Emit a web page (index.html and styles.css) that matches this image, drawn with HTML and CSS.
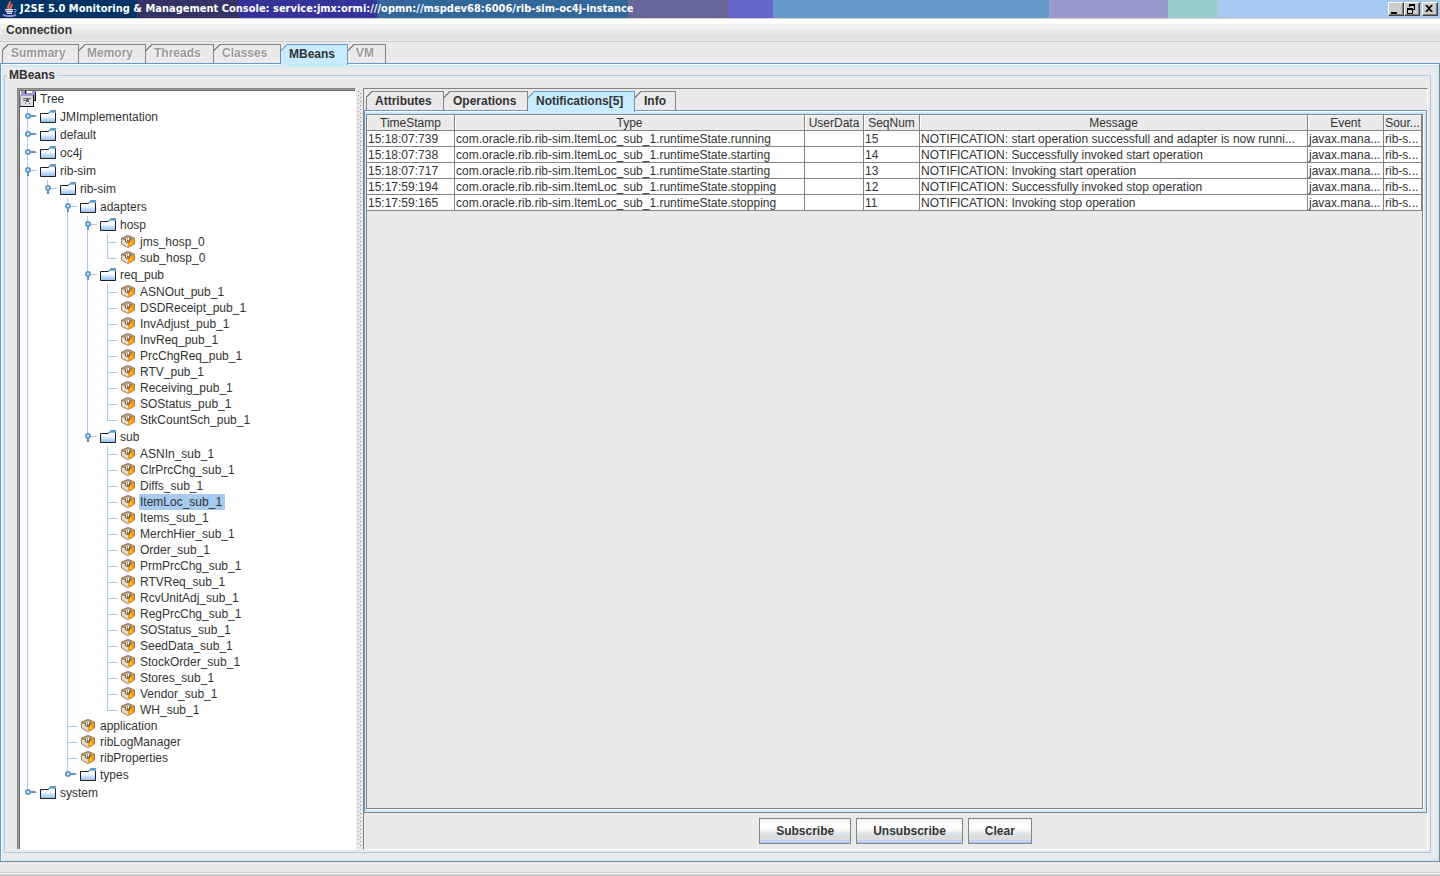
FILE: index.html
```html
<!DOCTYPE html>
<html lang="en">
<head>
  <meta charset="UTF-8">
  <meta name="viewport" content="width=device-width, initial-scale=1.0">
  <title>J2SE 5.0 Monitoring &amp; Management Console</title>
  <link rel="stylesheet" href="styles.css">
</head>
<body>
  <svg class="sprite" aria-hidden="true">
    <defs>
      <linearGradient id="folderFill" x1="0" y1="0" x2="0" y2="1">
        <stop offset="0" stop-color="#fff"/>
        <stop offset=".45" stop-color="#f2f8ff"/>
        <stop offset=".55" stop-color="#cfe6fb"/>
        <stop offset="1" stop-color="#8fbcea"/>
      </linearGradient>
      <symbol id="folder" viewBox="0 0 16 14">
        <path d="M.5 3.500H8l1.500-1H15.500V12.500H.5z" fill="url(#folderFill)" stroke="#222"/>
        <path d="M9 2.500L10.500 0H16V3H8.500z" fill="#5f9bcb"/>
        <path d="M10 2h5v1h-5z" fill="#7cc4c4"/>
      </symbol>
      <symbol id="bean" viewBox="0 0 14 13">
        <path d="M0 3L4 1 7 0l3 1 4 2v6l-3 2-4 2-4-2-3-2z" fill="#9c7c54"/>
        <path d="M1 4l6 3v5L1 9z" fill="#ecdcc8"/>
        <path d="M7 7l6-4v6l-6 3.500z" fill="#ff9a0c"/>
        <path d="M2 3l5-2 5 2-5 3z" fill="#b4a794"/>
        <path d="M4 4h1v3H4zM5 7h3v1H5zM8 4h1v3H8z" fill="#75604a"/>
        <path d="M5 4h1v2H5zM7 3h1v2H7z" fill="#fff"/>
        <path d="M6 5h1v1H6zM9 3h1v1H9z" fill="#5b4632"/>
        <path d="M9 7h2v3H9z" fill="#ffb94a"/>
      </symbol>
      <symbol id="closed" viewBox="0 0 12 12">
        <path d="M5 5h6v2H5zM11 5.500h1v1h-1z" fill="#5f93c4"/>
        <circle cx="4" cy="6" r="2" fill="#fff" stroke="#5f9bcb" stroke-width="2"/>
      </symbol>
      <symbol id="open" viewBox="0 0 12 12">
        <path d="M3 7h2v5H3z" fill="#5f93c4"/>
        <circle cx="4" cy="6" r="2" fill="#fff" stroke="#5f9bcb" stroke-width="2"/>
      </symbol>
    </defs>
  </svg>

  <header class="titlebar">
    <svg class="java" viewBox="0 0 16 16" aria-hidden="true">
      <path d="M7 8C3.500 5 9.500 4 7.500.5M9 8C7 6 11 5 10 3" stroke="#f4694a" stroke-width="2" fill="none"/>
      <path d="M3 8h8v1H3zM4 10h7v1H4zM5 12h5v1H5z" fill="#dfe3ff"/>
      <path d="M3 9h8v1H3zM4 11h6v1H4z" fill="#7f7fc8"/>
      <path d="M12 8.500c3-.5 3 2 0 3" stroke="#b9c8f0" fill="none"/>
      <path d="M1 13.500c2 2 11 2 13 0" stroke="#8e8ed8" stroke-width="2" fill="none"/>
    </svg>
    <h1>J2SE 5.0 Monitoring &amp; Management Console: service:jmx:ormi:///opmn://mspdev68:6006/rib-sim-oc4j-instance</h1>
    <div class="winbuttons">
      <button aria-label="Minimize"><svg viewBox="0 0 12 10"><path d="M2 8h6v2H2z"/></svg></button>
      <button aria-label="Restore"><svg viewBox="0 0 12 10"><path d="M4 0h6v6H8V5h1V2H5v1H4zM2 4h6v6H2zM3 6v3h4V6z" fill-rule="evenodd"/></svg></button>
      <button class="close" aria-label="Close"><svg viewBox="0 0 12 10"><path d="M2 1h2l2 2 2-2h2L7 4.500 10 8H8L6 6 4 8H2l3-3.500z"/></svg></button>
    </div>
  </header>

  <nav class="menubar"><button>Connection</button></nav>

  <div class="tabs main-tabs" role="tablist">
    <button role="tab" disabled>Summary</button>
    <button role="tab" disabled>Memory</button>
    <button role="tab" disabled>Threads</button>
    <button role="tab" disabled>Classes</button>
    <button role="tab" class="selected" aria-selected="true">MBeans</button>
    <button role="tab" disabled>VM</button>
  </div>

  <main class="page">
    <fieldset>
      <legend>MBeans</legend>
      <div class="split">
        <div class="tree">
          <div class="root">
            <svg viewBox="0 0 16 16" aria-hidden="true">
              <path d="M1 0h15v9H1z" fill="#9c9ad0"/>
              <path d="M15 1h1v9h-4V9h3zM5 0h1v3H5z" fill="#111"/>
              <path d="M7 0h5v2H7z" fill="#fff"/>
              <path d="M0 4h13v12H0z" fill="#9c9ad0"/>
              <path d="M1 5h12v10H1z" fill="#dcdce4"/>
              <path d="M13 4h1v12H0v-1h13z" fill="#111"/>
              <path d="M3 7h8v1H3zM3 9h4v1H3zM6 8h3v3H6zM5 12h1v1H5zM9 12h1v1H9z" fill="#666"/>
            </svg>
            <span>Tree</span>
          </div>
          <ul>
            <li><div class="row"><button aria-label="Expand"><svg><use href="#closed"/></svg></button><svg class="folder"><use href="#folder"/></svg><a href="#">JMImplementation</a></div></li>
            <li><div class="row"><button aria-label="Expand"><svg><use href="#closed"/></svg></button><svg class="folder"><use href="#folder"/></svg><a href="#">default</a></div></li>
            <li><div class="row"><button aria-label="Expand"><svg><use href="#closed"/></svg></button><svg class="folder"><use href="#folder"/></svg><a href="#">oc4j</a></div></li>
            <li><div class="row"><button aria-label="Collapse"><svg><use href="#open"/></svg></button><svg class="folder"><use href="#folder"/></svg><a href="#">rib-sim</a></div>
              <ul>
                <li><div class="row"><button aria-label="Collapse"><svg><use href="#open"/></svg></button><svg class="folder"><use href="#folder"/></svg><a href="#">rib-sim</a></div>
                  <ul>
                    <li><div class="row"><button aria-label="Collapse"><svg><use href="#open"/></svg></button><svg class="folder"><use href="#folder"/></svg><a href="#">adapters</a></div>
                      <ul>
                        <li><div class="row"><button aria-label="Collapse"><svg><use href="#open"/></svg></button><svg class="folder"><use href="#folder"/></svg><a href="#">hosp</a></div>
                          <ul>
                            <li><div class="row leaf"><svg class="bean"><use href="#bean"/></svg><a href="#">jms_hosp_0</a></div></li>
                            <li><div class="row leaf"><svg class="bean"><use href="#bean"/></svg><a href="#">sub_hosp_0</a></div></li>
                          </ul>
                        </li>
                        <li><div class="row"><button aria-label="Collapse"><svg><use href="#open"/></svg></button><svg class="folder"><use href="#folder"/></svg><a href="#">req_pub</a></div>
                          <ul>
                            <li><div class="row leaf"><svg class="bean"><use href="#bean"/></svg><a href="#">ASNOut_pub_1</a></div></li>
                            <li><div class="row leaf"><svg class="bean"><use href="#bean"/></svg><a href="#">DSDReceipt_pub_1</a></div></li>
                            <li><div class="row leaf"><svg class="bean"><use href="#bean"/></svg><a href="#">InvAdjust_pub_1</a></div></li>
                            <li><div class="row leaf"><svg class="bean"><use href="#bean"/></svg><a href="#">InvReq_pub_1</a></div></li>
                            <li><div class="row leaf"><svg class="bean"><use href="#bean"/></svg><a href="#">PrcChgReq_pub_1</a></div></li>
                            <li><div class="row leaf"><svg class="bean"><use href="#bean"/></svg><a href="#">RTV_pub_1</a></div></li>
                            <li><div class="row leaf"><svg class="bean"><use href="#bean"/></svg><a href="#">Receiving_pub_1</a></div></li>
                            <li><div class="row leaf"><svg class="bean"><use href="#bean"/></svg><a href="#">SOStatus_pub_1</a></div></li>
                            <li><div class="row leaf"><svg class="bean"><use href="#bean"/></svg><a href="#">StkCountSch_pub_1</a></div></li>
                          </ul>
                        </li>
                        <li><div class="row"><button aria-label="Collapse"><svg><use href="#open"/></svg></button><svg class="folder"><use href="#folder"/></svg><a href="#">sub</a></div>
                          <ul>
                            <li><div class="row leaf"><svg class="bean"><use href="#bean"/></svg><a href="#">ASNIn_sub_1</a></div></li>
                            <li><div class="row leaf"><svg class="bean"><use href="#bean"/></svg><a href="#">ClrPrcChg_sub_1</a></div></li>
                            <li><div class="row leaf"><svg class="bean"><use href="#bean"/></svg><a href="#">Diffs_sub_1</a></div></li>
                            <li><div class="row leaf"><svg class="bean"><use href="#bean"/></svg><a href="#" class="current">ItemLoc_sub_1</a></div></li>
                            <li><div class="row leaf"><svg class="bean"><use href="#bean"/></svg><a href="#">Items_sub_1</a></div></li>
                            <li><div class="row leaf"><svg class="bean"><use href="#bean"/></svg><a href="#">MerchHier_sub_1</a></div></li>
                            <li><div class="row leaf"><svg class="bean"><use href="#bean"/></svg><a href="#">Order_sub_1</a></div></li>
                            <li><div class="row leaf"><svg class="bean"><use href="#bean"/></svg><a href="#">PrmPrcChg_sub_1</a></div></li>
                            <li><div class="row leaf"><svg class="bean"><use href="#bean"/></svg><a href="#">RTVReq_sub_1</a></div></li>
                            <li><div class="row leaf"><svg class="bean"><use href="#bean"/></svg><a href="#">RcvUnitAdj_sub_1</a></div></li>
                            <li><div class="row leaf"><svg class="bean"><use href="#bean"/></svg><a href="#">RegPrcChg_sub_1</a></div></li>
                            <li><div class="row leaf"><svg class="bean"><use href="#bean"/></svg><a href="#">SOStatus_sub_1</a></div></li>
                            <li><div class="row leaf"><svg class="bean"><use href="#bean"/></svg><a href="#">SeedData_sub_1</a></div></li>
                            <li><div class="row leaf"><svg class="bean"><use href="#bean"/></svg><a href="#">StockOrder_sub_1</a></div></li>
                            <li><div class="row leaf"><svg class="bean"><use href="#bean"/></svg><a href="#">Stores_sub_1</a></div></li>
                            <li><div class="row leaf"><svg class="bean"><use href="#bean"/></svg><a href="#">Vendor_sub_1</a></div></li>
                            <li><div class="row leaf"><svg class="bean"><use href="#bean"/></svg><a href="#">WH_sub_1</a></div></li>
                          </ul>
                        </li>
                      </ul>
                    </li>
                    <li><div class="row leaf"><svg class="bean"><use href="#bean"/></svg><a href="#">application</a></div></li>
                    <li><div class="row leaf"><svg class="bean"><use href="#bean"/></svg><a href="#">ribLogManager</a></div></li>
                    <li><div class="row leaf"><svg class="bean"><use href="#bean"/></svg><a href="#">ribProperties</a></div></li>
                    <li><div class="row"><button aria-label="Expand"><svg><use href="#closed"/></svg></button><svg class="folder"><use href="#folder"/></svg><a href="#">types</a></div></li>
                  </ul>
                </li>
              </ul>
            </li>
            <li><div class="row"><button aria-label="Expand"><svg><use href="#closed"/></svg></button><svg class="folder"><use href="#folder"/></svg><a href="#">system</a></div></li>
          </ul>
        </div>

        <div class="divider"></div>

        <section class="detail">
          <div class="tabs detail-tabs" role="tablist">
            <button role="tab">Attributes</button>
            <button role="tab">Operations</button>
            <button role="tab" class="selected" aria-selected="true">Notifications[5]</button>
            <button role="tab">Info</button>
          </div>
          <div class="pane">
            <div class="scroll">
              <table>
                <colgroup>
                  <col class="c-time"><col class="c-type"><col class="c-user"><col class="c-seq"><col><col class="c-event"><col class="c-source">
                </colgroup>
                <thead>
                  <tr><th>TimeStamp</th><th>Type</th><th>UserData</th><th>SeqNum</th><th>Message</th><th>Event</th><th>Sour...</th></tr>
                </thead>
                <tbody>
                  <tr><td>15:18:07:739</td><td>com.oracle.rib.rib-sim.ItemLoc_sub_1.runtimeState.running</td><td></td><td>15</td><td>NOTIFICATION: start operation successfull and adapter is now runni...</td><td>javax.mana...</td><td>rib-s...</td></tr>
                  <tr><td>15:18:07:738</td><td>com.oracle.rib.rib-sim.ItemLoc_sub_1.runtimeState.starting</td><td></td><td>14</td><td>NOTIFICATION: Successfully invoked start operation</td><td>javax.mana...</td><td>rib-s...</td></tr>
                  <tr><td>15:18:07:717</td><td>com.oracle.rib.rib-sim.ItemLoc_sub_1.runtimeState.starting</td><td></td><td>13</td><td>NOTIFICATION: Invoking start operation</td><td>javax.mana...</td><td>rib-s...</td></tr>
                  <tr><td>15:17:59:194</td><td>com.oracle.rib.rib-sim.ItemLoc_sub_1.runtimeState.stopping</td><td></td><td>12</td><td>NOTIFICATION: Successfully invoked stop operation</td><td>javax.mana...</td><td>rib-s...</td></tr>
                  <tr><td>15:17:59:165</td><td>com.oracle.rib.rib-sim.ItemLoc_sub_1.runtimeState.stopping</td><td></td><td>11</td><td>NOTIFICATION: Invoking stop operation</td><td>javax.mana...</td><td>rib-s...</td></tr>
                </tbody>
              </table>
            </div>
          </div>
          <div class="actions">
            <button>Subscribe</button>
            <button>Unsubscribe</button>
            <button>Clear</button>
          </div>
        </section>
      </div>
    </fieldset>
  </main>

  <footer class="status"></footer>
</body>
</html>
```

FILE: styles.css
```css
:root {
  --bg: #eaeaea;
  --text: #333;
  --gray: #848484;
  --blue: #6699cc;
  --line: #a6caf0;
  --cyan: #c8ebff;
}
* {
  box-sizing: border-box;
}
body {
  margin: 0;
  min-height: 100vh;
  display: flex;
  flex-direction: column;
  background: var(--bg);
  color: var(--text);
  font: 12px/16px "Liberation Sans", Arial, sans-serif;
}
button {
  font: bold 12px/16px "Liberation Sans", Arial, sans-serif;
  color: var(--text);
  background: none;
  border: 0;
  padding: 0;
}
a {
  color: inherit;
  text-decoration: none;
}
.sprite {
  position: absolute;
  width: 0;
  height: 0;
}

/* window title */
.titlebar {
  display: flex;
  align-items: center;
  height: 19px;
  padding: 0 2px;
  border-bottom: 1px solid #d4d0c8;
  background: linear-gradient(90deg, #003366 137px, #333366 137px 238px, #333399 238px 377px, #336699 377px 628px, #666699 628px 728px, #6666cc 728px 773px, #6699cc 773px 1049px, #9999cc 1049px 1168px, #99cccc 1168px 1218px, #a6caf0 1218px);
}
.java {
  width: 16px;
  height: 16px;
}
.titlebar h1 {
  flex: 1;
  margin: 0 0 0 2px;
  color: #fff;
  font: bold 11px/18px "DejaVu Sans Condensed", Tahoma, sans-serif;
  white-space: nowrap;
}
.winbuttons {
  display: flex;
}
.winbuttons button {
  width: 16px;
  height: 14px;
  background: #ccc;
  border: 1px solid;
  border-color: #fff #404040 #404040 #fff;
  box-shadow: inset -1px -1px #808080;
}
.winbuttons .close {
  margin-left: 2px;
}
.winbuttons svg {
  display: block;
  width: 12px;
  height: 10px;
}

.menubar {
  height: 23px;
  padding: 3px 6px;
  border-bottom: 1px solid #ccc;
  background: linear-gradient(#fff 5px, #f2f2f2 5px 10px, #eaeaea 10px 15px, #e2e2e2 15px 21px, #eaeaea 21px);
}
.menubar button {
  display: block;
}

/* tabs with a cut top left corner */
.tabs {
  display: grid;
  position: relative;
}
.tabs button {
  --edge: var(--gray);
  height: 19px;
  text-align: left;
  padding: 0 0 0 9px;
  border-right: 1px solid var(--edge);
  background:
    linear-gradient(135deg, transparent 4px, var(--edge) 4px 5px, transparent 5px) 0 0 / 7px 7px no-repeat,
    linear-gradient(var(--edge), var(--edge)) 6px 0 / 100% 1px no-repeat;
}
.tabs button:first-child {
  background:
    linear-gradient(135deg, transparent 4px, var(--edge) 4px 5px, transparent 5px) 0 0 / 7px 7px no-repeat,
    linear-gradient(var(--edge), var(--edge)) 6px 0 / 100% 1px no-repeat,
    linear-gradient(var(--edge), var(--edge)) 0 6px / 1px 100% no-repeat;
}
.tabs button:disabled {
  padding-bottom: 1px;
  color: #999;
  text-shadow: 1px 1px #fff;
}
.tabs .selected {
  --edge: var(--blue);
  height: 21px;
  padding: 0 0 1px 8px;
  background-color: var(--cyan);
  clip-path: polygon(6px 0, 100% 0, 100% 100%, 0 100%, 0 6px);
}
.main-tabs {
  grid-template-columns: 77px 67px 68px 67px 67px 38px;
  height: 19px;
  margin: 2px 0 0 2px;
}
.main-tabs button + button {
  padding-left: 8px;
}
.detail-tabs {
  grid-template-columns: 78px 84px 107px 41px;
  height: 19px;
  margin: 2px 0 0 2px;
}
.detail-tabs button:not(.selected) {
  padding-top: 1px;
}

.page {
  flex: 1;
  display: flex;
  padding: 4px 8px 8px 3px;
  border: 1px solid;
  border-color: var(--blue) var(--gray) var(--gray) var(--blue);
  box-shadow: inset 1px 1px #fff, inset 2px 3px var(--cyan), inset -2px -2px var(--cyan);
}
fieldset {
  flex: 1;
  display: flex;
  min-width: 0;
  margin: 0;
  padding: 5px 2px 2px 12px;
  border: 1px solid var(--line);
}
legend {
  margin-left: -10px;
  padding: 0 2px;
  font-weight: bold;
  line-height: 15px;
}
.split {
  flex: 1;
  min-width: 0;
  display: flex;
}

/* tree */
.tree {
  width: 339px;
  flex: none;
  border: 1px solid;
  border-color: var(--gray) #fff #fff var(--gray);
  box-shadow: inset 1px 1px #9c9c9c, inset 2px 2px #666;
  background: #fff;
  padding: 2px 0 0 2px;
}
.root {
  display: flex;
  gap: 4px;
  height: 17px;
}
.root svg {
  width: 16px;
  height: 16px;
}
.tree ul {
  list-style: none;
  margin: 0;
  padding: 0;
}
.tree li {
  background: linear-gradient(var(--line), var(--line)) 7px 0 / 1px 100% no-repeat;
}
.tree li:last-child {
  background-size: 1px 9px;
}
.tree li ul {
  padding-left: 20px;
}
.row {
  display: flex;
  align-items: center;
  height: 18px;
  background: linear-gradient(var(--line), var(--line)) 7px 8px / 10px 1px no-repeat;
}
.leaf {
  height: 16px;
  padding-left: 20px;
}
.row button {
  width: 20px;
  height: 18px;
  padding: 2px 0 0 4px;
}
.row button svg {
  display: block;
  width: 12px;
  height: 12px;
  margin-bottom: 4px;
}
.row a {
  padding: 0 3px 0 1px;
}
.folder {
  width: 16px;
  height: 14px;
  margin-right: 3px;
}
.bean {
  width: 14px;
  height: 13px;
  margin: 0 4px 1px 1px;
}
.current {
  background: var(--line);
}

.divider {
  width: 7px;
  margin: 3px 0;
  background:
    conic-gradient(at 1px 1px, transparent 270deg, #8a8a8a 270deg) 2px 0 / 4px 4px,
    conic-gradient(at 1px 1px, transparent 270deg, #8a8a8a 270deg) 4px 2px / 4px 4px;
  background-clip: content-box;
  padding: 0 2px 0 2px;
}

/* right side */
.detail {
  flex: 1;
  min-width: 0;
  display: flex;
  flex-direction: column;
  border: 1px solid;
  border-color: var(--gray) #fff #fff var(--gray);
}
.pane {
  flex: 1;
  display: flex;
  padding: 3px 3px 3px 1px;
  border: 1px solid;
  border-color: var(--blue) var(--gray) var(--gray) var(--blue);
  box-shadow: inset 0 1px #fff, inset 0 3px var(--cyan), inset -3px -3px var(--cyan), inset 1px 0 var(--cyan);
}
.scroll {
  flex: 1;
  min-width: 0;
  border: 1px solid var(--gray);
  background: var(--bg);
  box-shadow: 1px 1px #fff;
}
table {
  width: 100%;
  table-layout: fixed;
  border-spacing: 0;
}
th, td {
  height: 16px;
  padding: 2px 1px 0;
  border: solid var(--gray);
  border-width: 0 1px 1px 0;
  line-height: 13px;
  white-space: nowrap;
  overflow: hidden;
}
th {
  font-weight: normal;
  box-shadow: inset 1px 1px #fff;
}
td {
  background: #fff;
}
.c-time {
  width: 88px;
}
.c-type {
  width: 350px;
}
.c-user {
  width: 59px;
}
.c-seq {
  width: 56px;
}
.c-event {
  width: 76px;
}
.c-source {
  width: 38px;
}

.actions {
  display: flex;
  justify-content: center;
  gap: 5px;
  padding: 5px 0;
}
.actions button {
  height: 26px;
  padding: 0 16px;
  border: 1px solid var(--gray);
  background: linear-gradient(#f0f0f0, #fff 5px, #fff 9px, #e4e4e4 15px, var(--cyan) 15px, var(--cyan) 16px, #dcdcdc 16px, #dcdcdc 21px, #c8cdff 21px, #c8cdff 23px, var(--line) 23px);
}

.status {
  height: 14px;
  border-bottom: 2px solid #ccc;
  box-shadow: inset 0 -1px #fff, inset 0 -2px #ccc;
}
```
